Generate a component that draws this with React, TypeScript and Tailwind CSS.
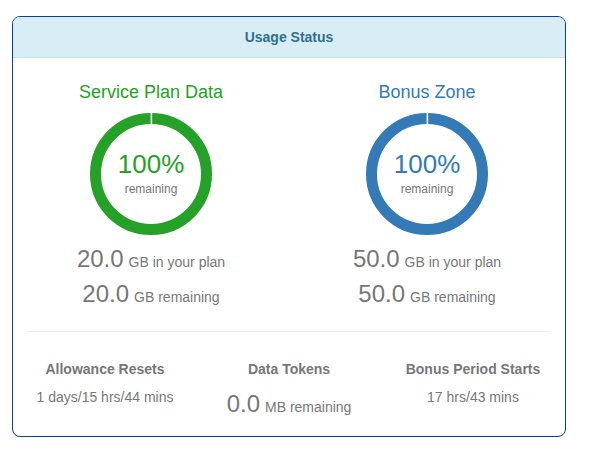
import React from "react";

function Donut({ color, textColor }: { color: string; textColor: string }) {
  return (
    <div className="relative w-[122px] h-[122px]">
      <svg width="122" height="122" viewBox="0 0 122 122" className="absolute inset-0">
        <circle cx="61" cy="61" r="55.5" fill="none" stroke={color} strokeWidth="11" />
        <rect x="60.6" y="0" width="1.6" height="12" fill="#ffffff" />
      </svg>
      <div className="absolute inset-0 flex flex-col items-center pt-[37px]">
        <div className={`text-[26px] leading-[28px] ${textColor}`}>100%</div>
        <div className="mt-[3px] text-[12px] leading-[16px] text-[#777777]">remaining</div>
      </div>
    </div>
  );
}

function UsageColumn({
  title,
  titleColor,
  ringColor,
  total,
}: {
  title: string;
  titleColor: string;
  ringColor: string;
  total: string;
}) {
  return (
    <div className="flex flex-col items-center">
      <div className={`text-[18px] leading-[20px] ${titleColor}`}>{title}</div>
      <div className="mt-[11px]">
        <Donut color={ringColor} textColor={titleColor} />
      </div>
      <div className="mt-[6px] flex items-baseline text-[#777777]">
        <span className="text-[24px] leading-[35px]">{total}</span>
        <span className="ml-[5px] text-[14px] leading-none">GB in your plan</span>
      </div>
      <div className="flex items-baseline text-[#777777]">
        <span className="text-[24px] leading-[35px]">{total}</span>
        <span className="ml-[5px] text-[14px] leading-none">GB remaining</span>
      </div>
    </div>
  );
}

export default function App() {
  return (
    <div className="pl-[12px] pt-[16px] font-['Liberation_Sans',Arial,sans-serif] bg-white min-h-[461px]">
      <div className="w-[554px] rounded-[8px] border border-[#0a3ba6] overflow-hidden bg-white">
        <div className="h-[41px] bg-[#d9edf7] border-b border-[#bce8f1] flex items-center justify-center">
          <span className="text-[14px] leading-[20px] font-bold text-[#31708f]">Usage Status</span>
        </div>
        <div className="pt-[24px] grid grid-cols-2">
          <UsageColumn
            title="Service Plan Data"
            titleColor="text-[#24a126]"
            ringColor="#24a126"
            total="20.0"
          />
          <UsageColumn
            title="Bonus Zone"
            titleColor="text-[#337ab7]"
            ringColor="#337ab7"
            total="50.0"
          />
        </div>
        <div className="mx-[15px] mt-[20px] border-t border-[#eeeeee]" />
        <div className="pt-[27px] pb-[15px] grid grid-cols-3 text-[#777777]">
          <div className="flex flex-col items-center">
            <div className="text-[14px] leading-[20px] font-bold">Allowance Resets</div>
            <div className="mt-[8px] text-[14px] leading-[20px]">1 days/15 hrs/44 mins</div>
          </div>
          <div className="flex flex-col items-center">
            <div className="text-[14px] leading-[20px] font-bold">Data Tokens</div>
            <div className="mt-[8px] flex items-baseline">
              <span className="text-[24px] leading-[34px]">0.0</span>
              <span className="ml-[5px] text-[14px] leading-none">MB remaining</span>
            </div>
          </div>
          <div className="flex flex-col items-center">
            <div className="text-[14px] leading-[20px] font-bold">Bonus Period Starts</div>
            <div className="mt-[8px] text-[14px] leading-[20px]">17 hrs/43 mins</div>
          </div>
        </div>
      </div>
    </div>
  );
}
